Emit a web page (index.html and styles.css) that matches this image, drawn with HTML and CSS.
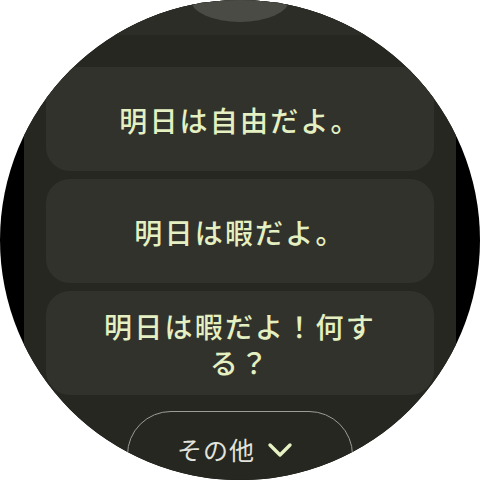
FILE: index.html
```html
<!DOCTYPE html>
<html lang="ja">
<head>
<meta charset="utf-8">
<link rel="stylesheet" href="styles.css">
</head>
<body>
<div class="watch">
  <div class="screen">
    <div class="top-card"><div class="top-pill"></div></div>
    <div class="list">
      <div class="card"><span class="card-text">明日は自由だよ。</span></div>
      <div class="card"><span class="card-text">明日は暇だよ。</span></div>
      <div class="card"><span class="card-text">明日は暇だよ！何する？</span></div>
    </div>
    <div class="more">
      <span class="more-text">その他</span>
      <svg class="chev" width="26" height="18" viewBox="0 0 26 18"><path d="M3 4 L13 14 L23 4" fill="none" stroke="#e6f2c4" stroke-width="3.4" stroke-linecap="round" stroke-linejoin="round"/></svg>
    </div>
  </div>
</div>
</body>
</html>
```
FILE: styles.css
```css
html, body {
  margin: 0;
  padding: 0;
  background: #ffffff;
}
.watch {
  width: 480px;
  height: 480px;
  border-radius: 50%;
  overflow: hidden;
  background: #000000;
}
.screen {
  margin: 0 24px;
  height: 480px;
  background: #262720;
  display: flex;
  flex-direction: column;
  align-items: center;
  font-family: "Noto Sans CJK JP", "Noto Sans", sans-serif;
}
.top-card {
  width: 388px;
  height: 35px;
  flex: none;
  background: #2c2d27;
  border-radius: 0 0 24px 24px;
  display: flex;
  justify-content: center;
}
.top-pill {
  width: 98px;
  height: 22px;
  background: #4a4b45;
  border-radius: 0 0 49px 49px / 0 0 22px 22px;
}
.list {
  margin-top: 32px;
  display: flex;
  flex-direction: column;
  gap: 8px;
}
.card {
  width: 388px;
  height: 104px;
  box-sizing: border-box;
  padding: 2px 52px 0;
  background: #31322b;
  border-radius: 24px;
  display: flex;
  align-items: center;
  justify-content: center;
  text-align: center;
}
.card-text {
  color: #e4f0c2;
  font-size: 28px;
  line-height: 36px;
  letter-spacing: 2.2px;
  font-weight: 500;
}
.more {
  margin-top: 16px;
  width: 226px;
  height: 90px;
  flex: none;
  box-sizing: border-box;
  border: 1.5px solid #9c9d96;
  border-radius: 44px;
  display: flex;
  justify-content: center;
  align-items: flex-start;
  padding: 20px 10px 0 0;
  gap: 12px;
}
.more-text {
  color: #e2e3dc;
  font-size: 25px;
  line-height: 34px;
  letter-spacing: 1px;
}
.chev {
  margin-top: 9px;
}
```
